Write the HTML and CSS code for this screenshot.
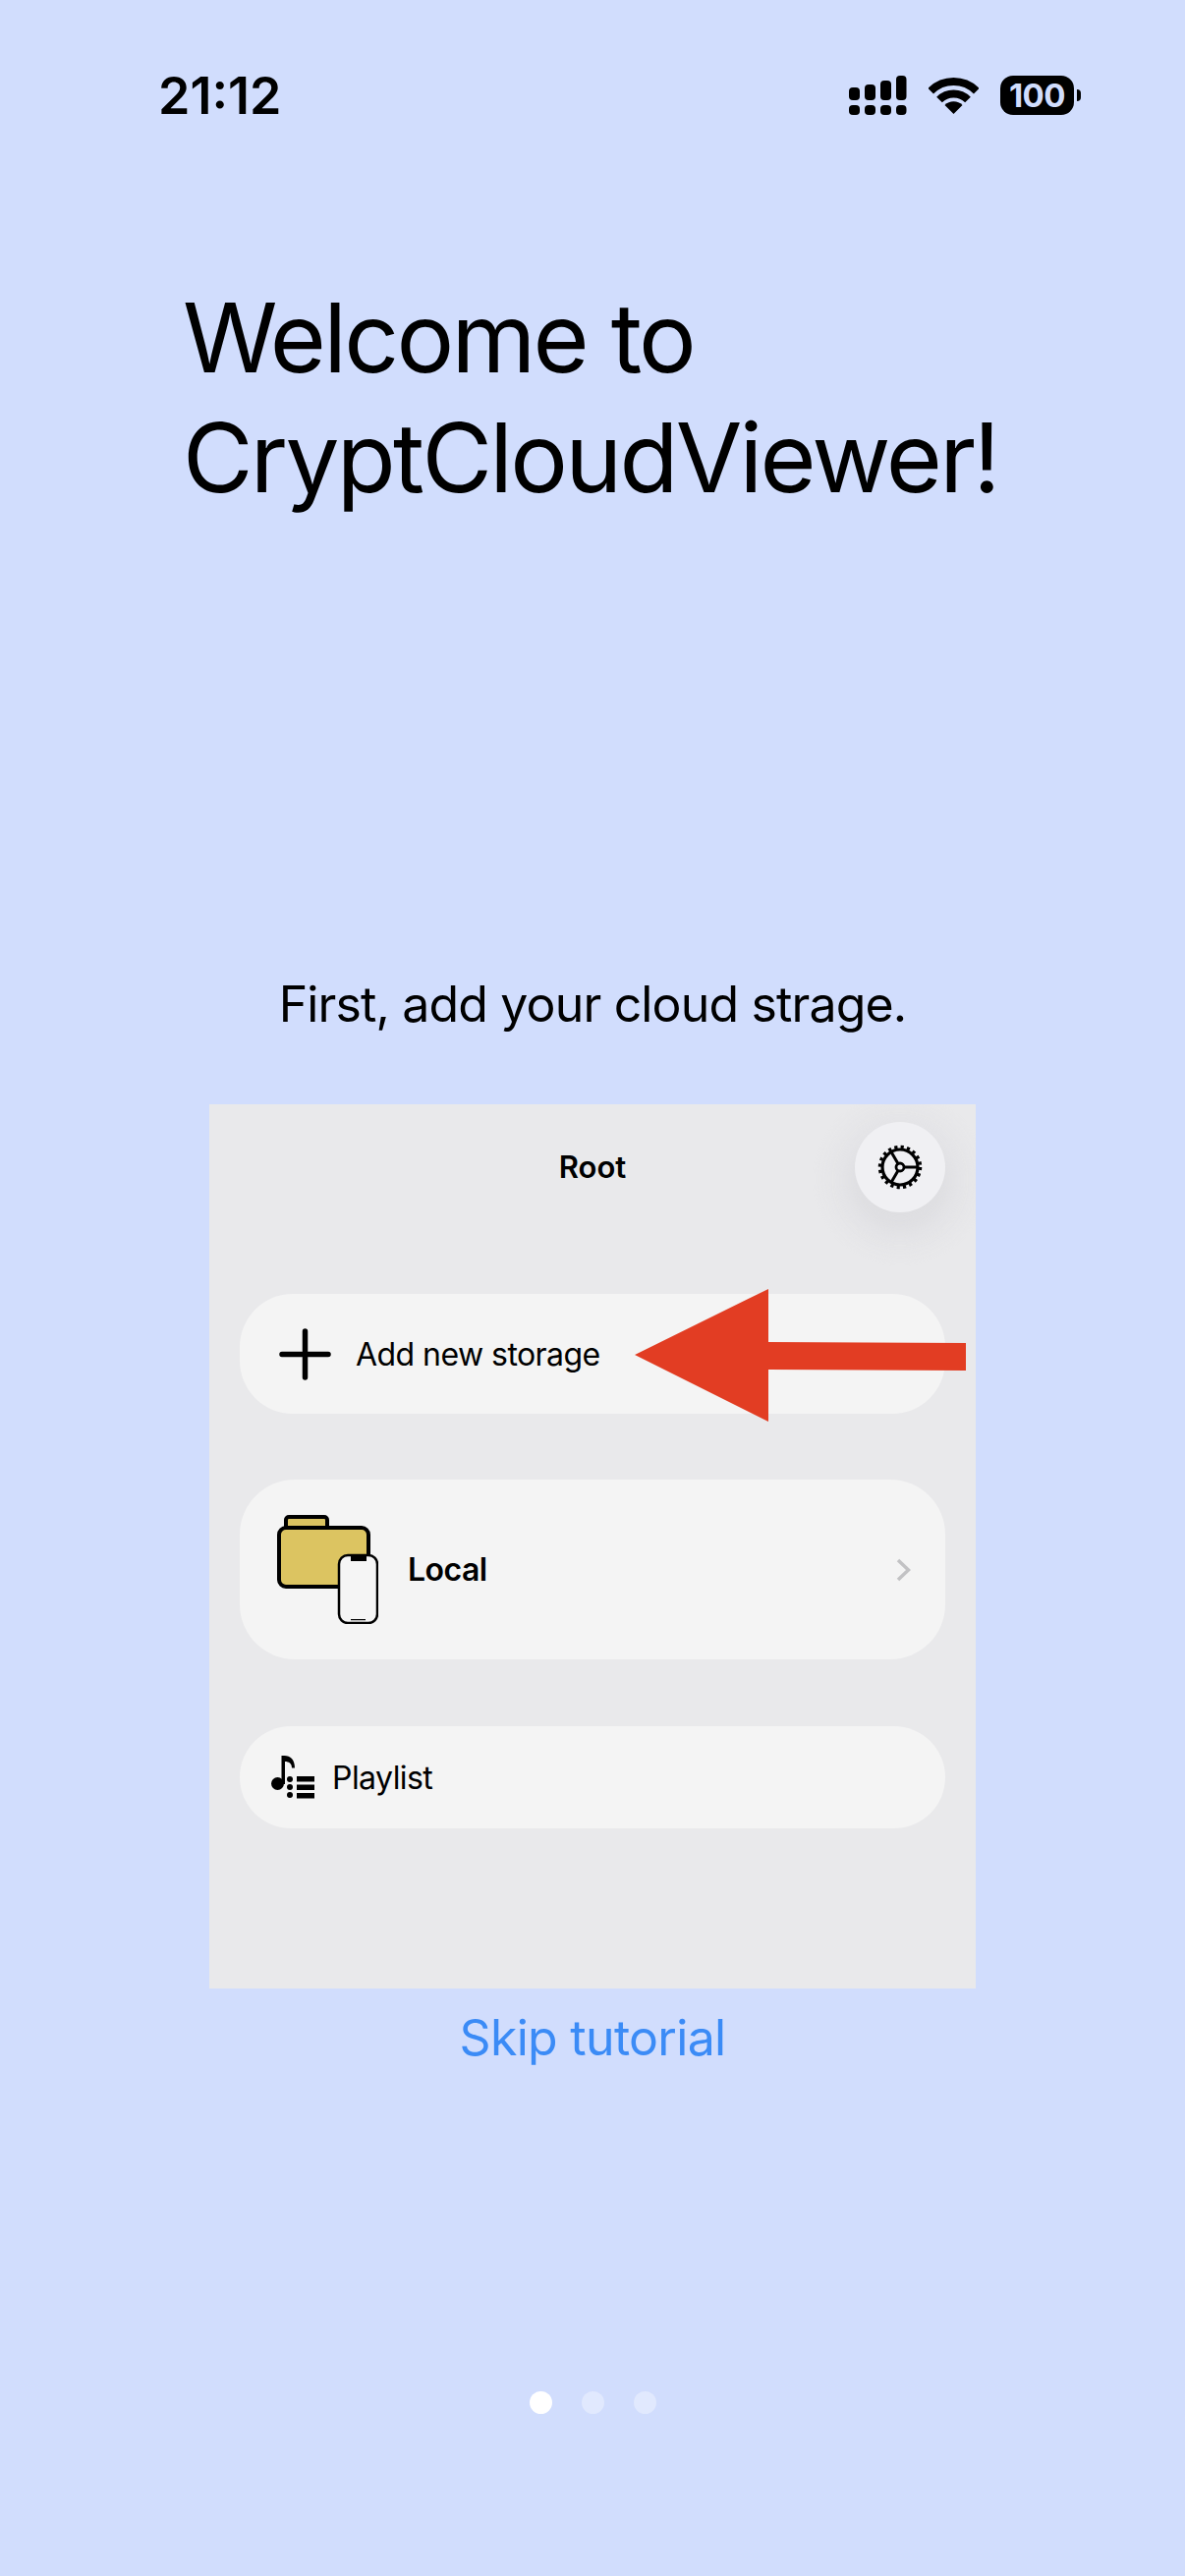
FILE: index.html
```html
<!DOCTYPE html>
<html lang="en">
<head>
<meta charset="utf-8">
<title>CryptCloudViewer</title>
<link rel="stylesheet" href="styles.css">
</head>
<body>
<main class="screen">
  <header class="status">
    <span class="time">21:12</span>
    <div class="status-icons">
      <svg class="signal" width="59" height="41" viewBox="0 0 59 41" fill="#000">
        <rect x="0" y="30" width="11" height="10" rx="4"/><rect x="16" y="30" width="11" height="10" rx="4"/><rect x="32" y="30" width="11" height="10" rx="4"/><rect x="48" y="30" width="10.500" height="10" rx="4"/>
        <rect x="0" y="12" width="11" height="13" rx="4"/><rect x="16" y="9" width="11" height="16" rx="4"/><rect x="32" y="5" width="11" height="20" rx="4"/><rect x="48" y="0" width="10.500" height="25" rx="4"/>
      </svg>
      <svg class="wifi" width="51" height="38" viewBox="0 0 51 38" fill="none" stroke="#000" stroke-width="8">
        <path d="M2.200 14.700A33 33 0 0 1 48.800 14.700"/>
        <path d="M11 23.500A20.500 20.500 0 0 1 40 23.500"/>
        <path d="M25.500 38L16.500 29A12.700 12.700 0 0 1 34.500 29Z" fill="#000" stroke="none"/>
      </svg>
      <div class="battery"><span class="battery-level">100</span><i class="battery-nub"></i></div>
    </div>
  </header>

  <h1 class="title">Welcome to<br>CryptCloudViewer!</h1>
  <p class="subtitle">First, add your cloud strage.</p>

  <section class="card">
    <div class="card-head">
      <span></span>
      <span class="card-title">Root</span>
      <button class="gear-button" aria-label="Settings">
        <svg width="48" height="48" viewBox="0 0 48 48" fill="none" stroke="#000">
          <circle cx="24" cy="24" r="20.500" stroke-width="3.500" stroke-dasharray="3.200 3.240"/>
          <circle cx="24" cy="24" r="18" stroke-width="3.200"/>
          <circle cx="24" cy="24" r="4" stroke-width="2.800"/>
          <path d="M28 24H42M22 20.500L15 8.500M22 27.500L15 39.500" stroke-width="3"/>
        </svg>
      </button>
    </div>

    <div class="row row-add">
      <svg width="53" height="53" viewBox="0 0 53 53" stroke="#000" stroke-width="5.500" stroke-linecap="round"><path d="M26.500 3V50M3 26.500H50"/></svg>
      <span class="row-label">Add new storage</span>
    </div>

    <div class="row row-local">
      <svg width="103" height="111" viewBox="0 0 103 111">
        <rect x="9" y="2" width="42" height="16" rx="3" fill="#dcc461" stroke="#000" stroke-width="4"/>
        <rect x="2" y="13" width="91" height="60" rx="7" fill="#dcc461" stroke="#000" stroke-width="4"/>
        <rect x="63" y="41" width="39" height="69" rx="9" fill="#f5f5f5" stroke="#000" stroke-width="2.500"/>
        <rect x="75" y="41" width="16" height="6" fill="#000"/>
        <rect x="75" y="106" width="15" height="1.200" fill="#000"/>
      </svg>
      <span class="row-label row-label-strong">Local</span>
      <svg class="chevron" width="15" height="24" viewBox="0 0 15 24" fill="none" stroke="#c2c2c4" stroke-width="3.500"><path d="M2 2L12.500 12L2 22"/></svg>
    </div>

    <div class="row row-playlist">
      <svg width="44" height="46" viewBox="0 0 44 46" fill="#000">
        <ellipse cx="6.500" cy="28.500" rx="6.500" ry="6.500"/>
        <path d="M10.500 29V0H13.500C19.500 0 24 4 24 12.500H21C21 8 18 6 14 6V29Z"/>
        <circle cx="19" cy="24" r="3"/><circle cx="19" cy="32" r="3"/><circle cx="19" cy="40" r="3"/>
        <rect x="26" y="21" width="18" height="5.500"/><rect x="26" y="29.500" width="18" height="5.500"/><rect x="26" y="38" width="18" height="5.500"/>
      </svg>
      <span class="row-label">Playlist</span>
    </div>

    <svg class="arrow" width="337" height="135" viewBox="0 0 337 135"><polygon fill="#e23d23" points="0,67 136,0 136,54 337,55 337,83 136,82 136,135"/></svg>
  </section>

  <a class="skip" href="#">Skip tutorial</a>

  <div class="dots">
    <i class="dot dot-active"></i>
    <i class="dot"></i>
    <i class="dot"></i>
  </div>
</main>
</body>
</html>
```
FILE: styles.css
```css
* { box-sizing: border-box; }
html, body { margin: 0; padding: 0; }
body { font-family: Inter, "Liberation Sans", sans-serif; color: #000; }
.screen {
  width: 1206px;
  height: 2622px;
  background: #d1ddfd;
  display: flex;
  flex-direction: column;
  overflow: hidden;
}
.status {
  display: flex;
  justify-content: space-between;
  align-items: center;
  height: 60px;
  margin-top: 68px;
  padding: 0 113px 0 161px;
}
.time { font-size: 52px; font-weight: 600; line-height: 60px; }
.status-icons { display: flex; align-items: center; gap: 22px; margin-top: -2px; }
.signal, .wifi { display: block; }
.battery {
  position: relative;
  width: 75px;
  height: 40px;
  border-radius: 13px;
  background: #000;
  color: #d1ddfd;
  display: flex;
  align-items: center;
  justify-content: center;
}
.battery-level { font-size: 33px; font-weight: 700; line-height: 40px; letter-spacing: -.5px; }
.battery-nub {
  position: absolute;
  left: 78px;
  top: 14px;
  width: 4px;
  height: 12px;
  background: #000;
  border-radius: 0 6px 6px 0;
}
.title {
  margin: 155px 0 0 186px;
  font-size: 98px;
  font-weight: 400;
  line-height: 122px;
  letter-spacing: -2.75px;
}
.subtitle {
  margin: 465px 0 0;
  text-align: center;
  font-size: 50px;
  line-height: 60px;
  letter-spacing: -.85px;
}
.card {
  position: relative;
  align-self: flex-start;
  margin: 72px 0 0 213px;
  width: 780px;
  height: 900px;
  padding: 0 31px;
  background: #e9e9eb;
  overflow: hidden;
}
.card-head {
  display: grid;
  grid-template-columns: 1fr auto 1fr;
  align-items: center;
  height: 128px;
  margin-bottom: 65px;
}
.card-title { font-size: 31px; font-weight: 600; line-height: 40px; }
.gear-button {
  justify-self: end;
  width: 92px;
  height: 92px;
  padding: 0;
  border: 0;
  border-radius: 50%;
  background: #f0f0f3;
  box-shadow: 0 14px 18px 6px rgba(205, 205, 210, .3), 0 12px 14px 32px rgba(220, 220, 225, .2);
  display: flex;
  align-items: center;
  justify-content: center;
}
.row {
  display: flex;
  align-items: center;
  background: #f4f4f4;
  margin-bottom: 67px;
}
.row-add { height: 122px; border-radius: 54px; padding-left: 40px; gap: 25px; }
.row-local { height: 183px; border-radius: 56px; padding: 0 35px 0 38px; gap: 30px; margin-bottom: 68px; }
.row-playlist { height: 104px; border-radius: 52px; padding-left: 32px; gap: 18px; }
.row-label { font-size: 32px; line-height: 40px; letter-spacing: -.55px; }
.row-add .row-label { margin-top: 2px; }
.row-playlist .row-label { margin-top: 2px; }
.row-label-strong { font-weight: 600; }
.chevron { margin-left: auto; }
.row-playlist > svg:first-child { margin-top: 2px; }
.arrow { position: absolute; left: 433px; top: 188px; }
.skip {
  margin-top: 20px;
  text-align: center;
  font-size: 50px;
  line-height: 60px;
  letter-spacing: -.7px;
  color: #3b8bf6;
  text-decoration: none;
}
.dots {
  display: flex;
  justify-content: center;
  gap: 30px;
  margin-top: 330px;
}
.dot { width: 23px; height: 23px; border-radius: 50%; background: rgba(255, 255, 255, .35); }
.dot-active { background: #fff; }
```
